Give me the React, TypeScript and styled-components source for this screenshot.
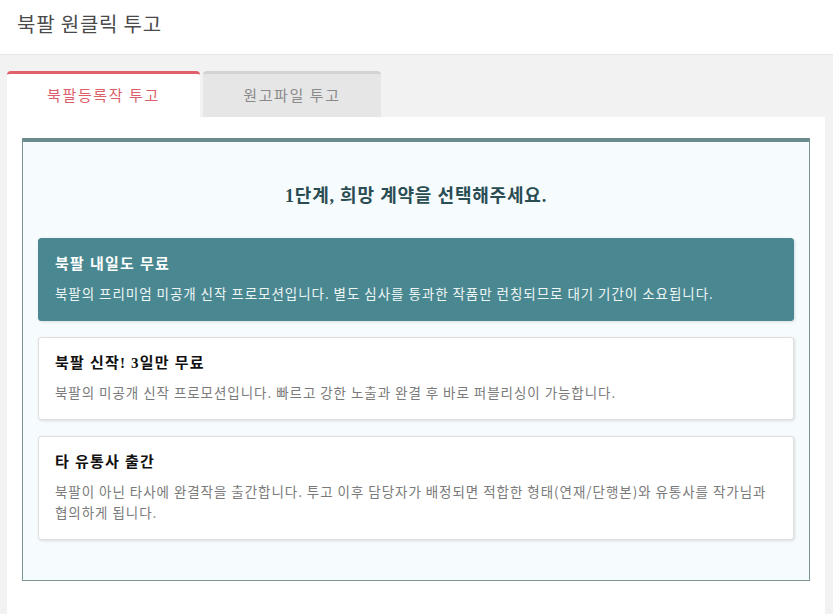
import styled, { createGlobalStyle } from "styled-components";

const GlobalStyle = createGlobalStyle`
  html, body {
    margin: 0;
    padding: 0;
    background: #f2f2f2;
  }
  body {
    font-family: "Noto Sans CJK KR", "Noto Sans", sans-serif;
  }
`;

interface Contract {
  title: string;
  description: string;
}

const contracts: Contract[] = [
  {
    title: "북팔 내일도 무료",
    description:
      "북팔의 프리미엄 미공개 신작 프로모션입니다. 별도 심사를 통과한 작품만 런칭되므로 대기 기간이 소요됩니다.",
  },
  {
    title: "북팔 신작! 3일만 무료",
    description:
      "북팔의 미공개 신작 프로모션입니다. 빠르고 강한 노출과 완결 후 바로 퍼블리싱이 가능합니다.",
  },
  {
    title: "타 유통사 출간",
    description:
      "북팔이 아닌 타사에 완결작을 출간합니다. 투고 이후 담당자가 배정되면 적합한 형태(연재/단행본)와 유통사를 작가님과 협의하게 됩니다.",
  },
];

const Page = styled.div`
  min-height: 614px;
  background: #f2f2f2;
  overflow: hidden;
`;

const Header = styled.header`
  height: 55px;
  background: #fff;
  border-bottom: 1px solid #e6e6e6;
  display: flex;
  align-items: center;
  padding: 0 17px;
  box-sizing: border-box;
`;

const HeaderTitle = styled.h1`
  margin: 0 0 8px;
  font-size: 20px;
  letter-spacing: 0.8px;
  font-weight: 400;
  color: #4a4a4a;
`;

const Body = styled.main`
  padding: 16px 8px 0 7px;
`;

const Tabs = styled.div`
  display: flex;
  gap: 3px;
`;

const Tab = styled.div<{ $active?: boolean }>`
  width: ${({ $active }) => ($active ? "193px" : "178px")};
  height: 46px;
  box-sizing: border-box;
  display: flex;
  align-items: center;
  justify-content: center;
  font-size: 15px;
  letter-spacing: 1.6px;
  border-radius: 4px 4px 0 0;
  border-top: 3px solid ${({ $active }) => ($active ? "#e0606b" : "#d3d3d3")};
  background: ${({ $active }) => ($active ? "#fff" : "#e6e6e6")};
  color: ${({ $active }) => ($active ? "#dc5f69" : "#8a8a8a")};
  padding-bottom: 2px;
`;

const Panel = styled.section`
  background: #fff;
  padding: 21px 15px 60px;
`;

const StepBox = styled.div`
  background: #f6fcfd;
  border: 1px solid #7c9595;
  border-top: 4px solid #6b8c8c;
  padding: 42px 15px 40px;
`;

const StepTitle = styled.h2`
  margin: 0 0 30px;
  text-align: center;
  font-family: "Liberation Serif", "Noto Sans CJK KR", serif;
  font-size: 18px;
  letter-spacing: 0.8px;
  line-height: 24px;
  font-weight: 700;
  color: #2a4c53;
`;

const CardList = styled.div`
  display: flex;
  flex-direction: column;
  gap: 16px;
`;

const Card = styled.div<{ $selected?: boolean }>`
  background: ${({ $selected }) => ($selected ? "#4a8891" : "#fff")};
  border: 1px solid ${({ $selected }) => ($selected ? "#4a8891" : "#dedede")};
  border-radius: 3px;
  box-shadow: 1px 1px 3px rgba(0, 0, 0, 0.12);
  padding: 15px 16px 16px;
`;

const CardTitle = styled.div<{ $selected?: boolean }>`
  font-family: "Liberation Serif", "Noto Sans CJK KR", serif;
  font-size: 15px;
  letter-spacing: 1.2px;
  line-height: 20px;
  font-weight: 700;
  color: ${({ $selected }) => ($selected ? "#fff" : "#111")};
  margin-bottom: 9px;
`;

const CardText = styled.div<{ $selected?: boolean }>`
  font-size: 13.5px;
  letter-spacing: 0.95px;
  line-height: 21px;
  color: ${({ $selected }) => ($selected ? "#eef5f5" : "#7a7a7a")};
`;

export default function App() {
  return (
    <>
      <GlobalStyle />
      <Page>
        <Header>
          <HeaderTitle>북팔 원클릭 투고</HeaderTitle>
        </Header>
        <Body>
          <Tabs>
            <Tab $active>북팔등록작 투고</Tab>
            <Tab>원고파일 투고</Tab>
          </Tabs>
          <Panel>
            <StepBox>
              <StepTitle>1단계, 희망 계약을 선택해주세요.</StepTitle>
              <CardList>
                {contracts.map((c, i) => (
                  <Card key={c.title} $selected={i === 0}>
                    <CardTitle $selected={i === 0}>{c.title}</CardTitle>
                    <CardText $selected={i === 0}>{c.description}</CardText>
                  </Card>
                ))}
              </CardList>
            </StepBox>
          </Panel>
        </Body>
      </Page>
    </>
  );
}
